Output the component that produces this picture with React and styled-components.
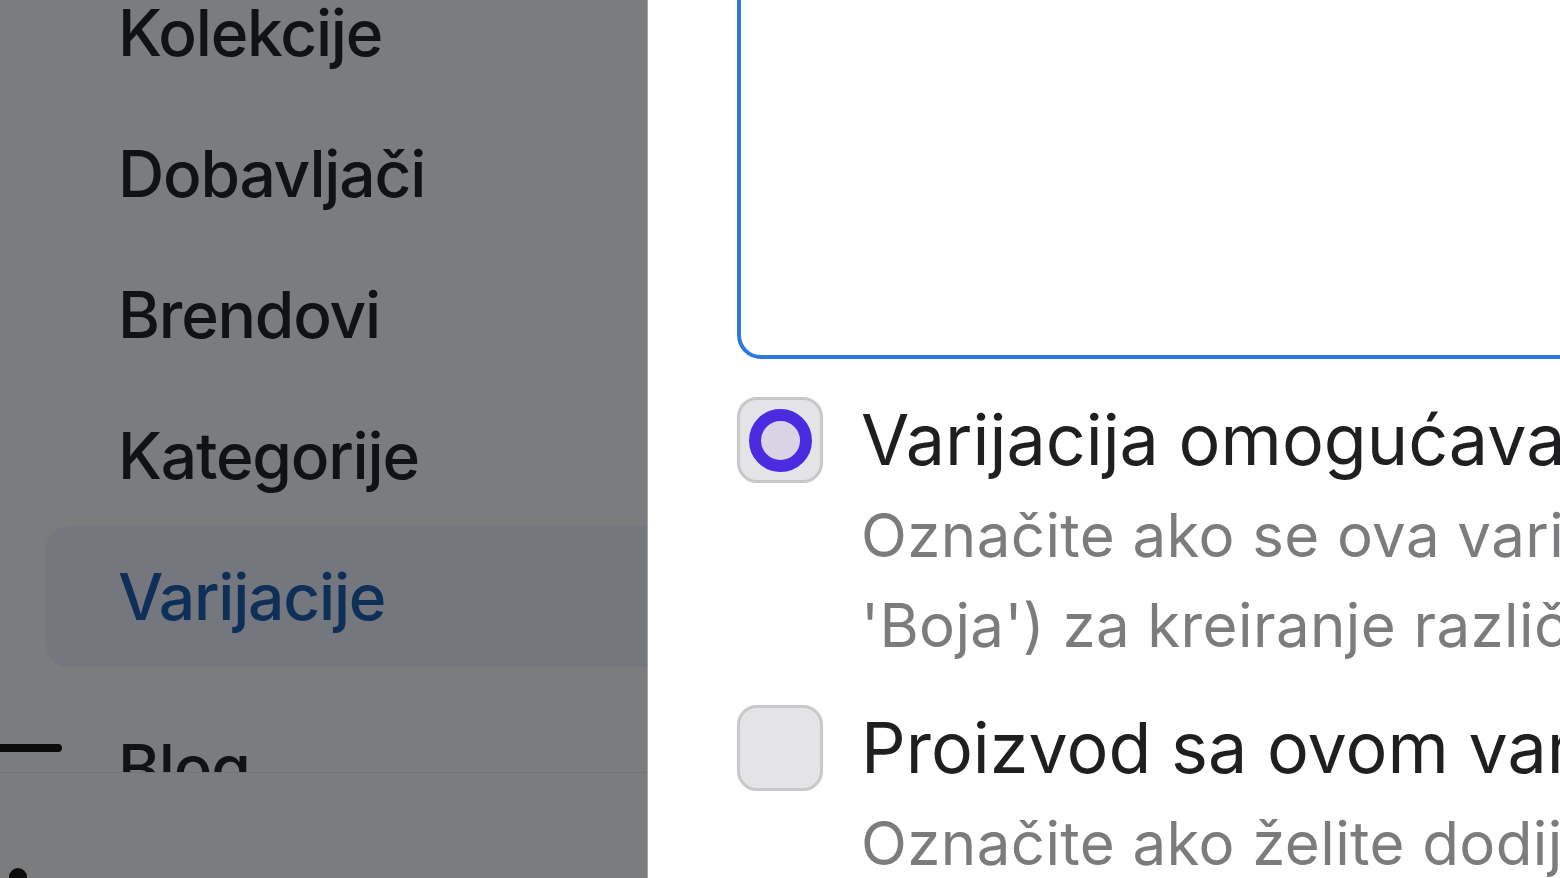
import React from "react";
import styled, { createGlobalStyle } from "styled-components";

const GlobalStyle = createGlobalStyle`
  html, body {
    margin: 0;
    padding: 0;
    height: 100%;
    overflow: hidden;
    background: #ffffff;
    font-family: Inter, "Noto Sans", "Liberation Sans", sans-serif;
  }
  #root {
    height: 100%;
  }
`;

const Page = styled.div`
  display: flex;
  height: 878px;
  width: 1560px;
  overflow: hidden;
`;

const Sidebar = styled.aside`
  position: relative;
  width: 647px;
  flex-shrink: 0;
  display: flex;
  flex-direction: column;
  background: #7b7c7e;
  border-right: 1px solid #a3a3a4;
`;

const NavScroll = styled.nav`
  height: 772px;
  overflow: hidden;
  border-bottom: 1px solid #737476;
`;

const NavList = styled.ul`
  list-style: none;
  margin: -38px 0 0;
  padding: 0 0 0 46px;
`;

const NavItem = styled.li`
  height: 141px;
  display: flex;
  align-items: center;
  padding-left: 72px;
  margin-top: ${(p) => (p.$gap ? "30px" : "0")};
  border-radius: 22px 0 0 22px;
  font-size: 64px;
  font-weight: 500;
  letter-spacing: -1.2px;
  color: ${(p) => (p.$active ? "#0e2f58" : "#111214")};
  background: ${(p) => (p.$active ? "#74777d" : "transparent")};
`;

const ToggleBar = styled.span`
  position: absolute;
  left: -4px;
  top: 744px;
  width: 66px;
  height: 8px;
  border-radius: 4px;
  background: #0b0b0b;
`;

const Footer = styled.div`
  flex: 1;
  position: relative;
`;

const Avatar = styled.span`
  position: absolute;
  left: 9px;
  top: 95px;
  width: 18px;
  height: 18px;
  border-radius: 50%;
  background: #0c0c0c;
`;

const Main = styled.main`
  flex: 1;
  overflow: hidden;
  padding-left: 89px;
`;

const Form = styled.div`
  width: 1400px;
  margin-top: -40px;
  display: flex;
  flex-direction: column;
`;

const TextArea = styled.textarea`
  display: block;
  box-sizing: border-box;
  width: 100%;
  height: 399px;
  border: 4px solid #2f78dc;
  border-radius: 24px;
  resize: none;
  outline: none;
  background: #fff;
  font: inherit;
`;

const Option = styled.div`
  display: flex;
  gap: 38px;
  margin-top: ${(p) => p.$top};
`;

const Box = styled.div`
  box-sizing: border-box;
  width: 86px;
  height: 86px;
  flex-shrink: 0;
  border-radius: 20px;
  background: #e4e4e6;
  border: 3px solid #c8c8ca;
  display: flex;
  align-items: center;
  justify-content: center;
`;

const Ring = styled.span`
  box-sizing: border-box;
  width: 63px;
  height: 63px;
  border-radius: 50%;
  border: 12px solid #4a2be0;
  background: #d8d4e6;
`;

const OptionText = styled.div`
  display: flex;
  flex-direction: column;
  white-space: nowrap;
`;

const Label = styled.div`
  font-size: 70px;
  line-height: 86px;
  font-weight: 400;
  color: #1f1f21;
`;

const Description = styled.div`
  margin-top: 7px;
  font-size: 60px;
  line-height: 90px;
  letter-spacing: 0.4px;
  color: #7c7c7e;
`;

const navItems = ["Kolekcije", "Dobavljači", "Brendovi", "Kategorije", "Varijacije"];

export default function App() {
  return (
    <>
      <GlobalStyle />
      <Page>
        <Sidebar>
          <NavScroll>
            <NavList>
              {navItems.map((item) => (
                <NavItem key={item} $active={item === "Varijacije"}>
                  {item}
                </NavItem>
              ))}
              <NavItem $gap>Blog</NavItem>
            </NavList>
          </NavScroll>
          <ToggleBar />
          <Footer>
            <Avatar />
          </Footer>
        </Sidebar>
        <Main>
          <Form>
            <TextArea readOnly aria-label="Opis" />
            <Option $top="38px">
              <Box>
                <Ring />
              </Box>
              <OptionText>
                <Label>Varijacija omogućava kreiranje varijanti proizvoda</Label>
                <Description>
                  Označite ako se ova varijacija koristi kao atribut (npr. 'Veličina' ili
                  <br />
                  'Boja') za kreiranje različitih varijanti proizvoda.
                </Description>
              </OptionText>
            </Option>
            <Option $top="35px">
              <Box />
              <OptionText>
                <Label>Proizvod sa ovom varijacijom je obavezan</Label>
                <Description>
                  Označite ako želite dodijeliti ovu varijaciju svim proizvodima.
                </Description>
              </OptionText>
            </Option>
          </Form>
        </Main>
      </Page>
    </>
  );
}
